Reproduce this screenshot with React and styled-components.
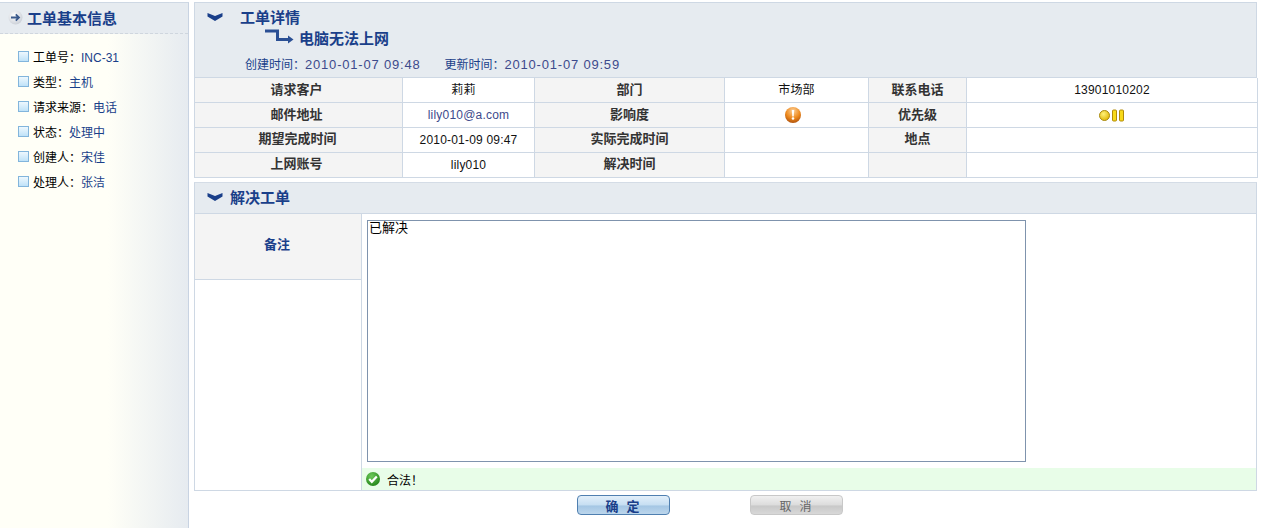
import styled, { createGlobalStyle } from 'styled-components'

const Global = createGlobalStyle`
    html, body {
        margin: 0;
        padding: 0;
        height: 100%;
        background: #fff;
        font-family: "Liberation Sans", "Noto Sans CJK SC", sans-serif;
        font-size: 12px;
        color: #000;
    }
`
const Page = styled.div`
    display: flex;
    height: 528px;
    overflow: hidden;
`
const Sidebar = styled.aside`
    width: 189px;
    flex: none;
    box-sizing: border-box;
    margin-top: 2px;
    border-top: 1px solid #ced8e4;
    border-right: 1px solid #c8d3e2;
    background: linear-gradient(90deg, #fffff7 0, #fffff7 108px, #e6ebf0 188px);
`
const SideHead = styled.div`
    height: 31px;
    box-sizing: border-box;
    display: flex;
    align-items: center;
    gap: 4px;
    padding: 0 0 2px 8px;
    background: #e6ebf0;
    border-bottom: 1px dashed #cfd6de;
    color: #1a3f8a;
    font-size: 15px;
    font-weight: bold;
`
const SideList = styled.ul`
    list-style: none;
    margin: 0;
    padding: 10px 0 0 18px;
`
const SideItem = styled.li`
    display: flex;
    align-items: center;
    height: 25px;
    gap: 4px;
`
const Square = styled.i`
    width: 9px;
    height: 9px;
    flex: none;
    border: 1px solid #82b5dc;
    background: linear-gradient(#eef8fe, #bfe2f8);
`
const Link = styled.span`
    color: #1a3f8a;
`
const Main = styled.main`
    width: 1063px;
    flex: none;
    margin: 2px 0 0 5px;
`
const DetailHead = styled.div`
    height: 76px;
    box-sizing: border-box;
    border: 1px solid #ced8e4;
    background: #e6ebf0;
    padding: 6px 0 0 12px;
    color: #1a3f8a;
`
const TitleRow = styled.div`
    display: flex;
    align-items: center;
    height: 15px;
    font-size: 15px;
    font-weight: bold;
    gap: 17px;
`
const SubRow = styled.div`
    display: flex;
    align-items: center;
    height: 16px;
    margin: 5px 0 0 57px;
    gap: 5px;
    font-size: 15px;
    font-weight: bold;
`
const Times = styled.div`
    display: flex;
    gap: 24px;
    margin: 12px 0 0 38px;
    line-height: 16px;
`
const Stamp = styled.span`
    color: #3d4a8c;
    font-size: 13px;
    letter-spacing: 0.8px;
`
const Grid = styled.div`
    display: grid;
    grid-template-columns: 208px 132px 190px 144px 98px 291px;
    grid-auto-rows: 25px;
    border-left: 1px solid #ced8e4;
`
const Cell = styled.div`
    box-sizing: border-box;
    display: flex;
    align-items: center;
    justify-content: center;
    border-right: 1px solid #ced8e4;
    border-bottom: 1px solid #ced8e4;
    background: #fff;
    color: ${p => (p.$blue ? '#3d4a8c' : '#111')};
    letter-spacing: 0.2px;
    padding-bottom: ${p => (p.$up ? '4px' : '0')};
    padding-right: ${p => p.$pull || 0}px;
`
const HeadCell = styled(Cell)`
    background: #f4f4f4;
    color: #333;
    font-size: 13px;
    font-weight: bold;
    letter-spacing: 0;
    padding-bottom: ${p => (p.$high ? '6px' : '4px')};
`
const Section = styled.section`
    margin-top: 4px;
    border: 1px solid #ced8e4;
    border-top-color: #d4dce6;
`
const SectionHead = styled.div`
    height: 31px;
    box-sizing: border-box;
    display: flex;
    align-items: center;
    gap: 7px;
    padding: 0 0 3px 12px;
    background: #e6ebf0;
    border-bottom: 1px solid #ced8e4;
    color: #1a3f8a;
    font-size: 15px;
    font-weight: bold;
`
const FormRow = styled.div`
    display: flex;
    height: 276px;
`
const LabelCol = styled.div`
    width: 167px;
    flex: none;
    box-sizing: border-box;
    border-right: 1px solid #ced8e4;
`
const Label = styled.div`
    height: 66px;
    box-sizing: border-box;
    display: flex;
    align-items: center;
    justify-content: center;
    padding: 0 2px 6px 0;
    background: #f4f4f4;
    border-bottom: 1px solid #ced8e4;
    color: #1a3f8a;
    font-size: 13px;
    font-weight: bold;
`
const FieldCol = styled.div`
    flex: 1;
    min-width: 0;
    display: flex;
    flex-direction: column;
`
const Area = styled.textarea`
    display: block;
    box-sizing: border-box;
    width: 659px;
    height: 242px;
    margin: 6px 0 6px 5px;
    padding: 0 1px;
    border: 1px solid #7f93ad;
    border-radius: 0;
    outline: none;
    resize: none;
    overflow: hidden;
    font: 13px/14px "Liberation Sans", "Noto Sans CJK SC", sans-serif;
    color: #000;
`
const Valid = styled.div`
    height: 22px;
    display: flex;
    align-items: center;
    gap: 7px;
    padding-left: 4px;
    background: #e8fde8;
`
const Actions = styled.div`
    display: flex;
    gap: 80px;
    margin: 4px 0 0 383px;
`
const Btn = styled.button`
    width: 93px;
    height: 20px;
    padding: 0;
    box-sizing: border-box;
    border-radius: 4px;
    border: 1px solid ${p => (p.$off ? '#c8c8c8' : '#4f7fb0')};
    background: ${p =>
        p.$off
            ? 'linear-gradient(#f0f0f0, #dcdcdc 50%, #c8c8c8 55%, #d8d8d8)'
            : 'linear-gradient(#e2effa, #c6def2 50%, #a4c6e4 55%, #bcd6ec)'};
    color: ${p => (p.$off ? '#666' : '#1a3f8a')};
    font: ${p => (p.$off ? 'normal' : 'bold')} ${p => (p.$off ? 12 : 13)}px "Liberation Sans", "Noto Sans CJK SC", sans-serif;
    letter-spacing: 8px;
    text-indent: 6px;
`

const ArrowOrb = () => (
    <svg width="15" height="15" viewBox="0 0 15 15">
        <defs>
            <radialGradient id="orb" cx="0.4" cy="0.35" r="0.7">
                <stop offset="0" stopColor="#ffffff" />
                <stop offset="1" stopColor="#c9ced6" />
            </radialGradient>
        </defs>
        <circle cx="7.5" cy="7.5" r="7" fill="url(#orb)" />
        <path d="M3 7.5h8M7.8 4.3l3.2 3.2-3.2 3.2" fill="none" stroke="#3b5a8c" strokeWidth="1.8" />
    </svg>
)
const Chevron = () => (
    <svg width="16" height="8" viewBox="0 0 16 8">
        <path d="M0.5 0 L8 3 L15.5 0 V3.5 L8 8 L0.5 3.5 Z" fill="#1a3f8a" />
    </svg>
)
const BentArrow = () => (
    <svg width="30" height="16" viewBox="0 0 30 16">
        <path d="M1 2h12.5v8.5h11" fill="none" stroke="#2a4f94" strokeWidth="3" />
        <path d="M24 6.5l5.5 4-5.5 4z" fill="#2a4f94" />
    </svg>
)
const Alert = () => (
    <svg width="16" height="16" viewBox="0 0 16 16">
        <defs>
            <radialGradient id="alert" cx="0.5" cy="0.25" r="0.8">
                <stop offset="0" stopColor="#fbd09a" />
                <stop offset="0.55" stopColor="#ee8a1e" />
                <stop offset="1" stopColor="#a84c0c" />
            </radialGradient>
        </defs>
        <circle cx="8" cy="8" r="8" fill="url(#alert)" />
        <path d="M6.8 3h2.4l-.5 6.5H7.3z" fill="#fff" />
        <circle cx="8" cy="11.5" r="1.3" fill="#fff" />
    </svg>
)
const Priority = () => (
    <svg width="27" height="13" viewBox="0 0 27 13">
        <defs>
            <radialGradient id="amber" cx="0.4" cy="0.35" r="0.7">
                <stop offset="0" stopColor="#fff27a" />
                <stop offset="1" stopColor="#e0b400" />
            </radialGradient>
        </defs>
        <circle cx="5.5" cy="6.5" r="5" fill="url(#amber)" stroke="#a88a10" />
        <rect x="13.5" y="1" width="4" height="11" rx="1" fill="#f7d918" stroke="#b08a08" />
        <rect x="20.5" y="1" width="4" height="11" rx="1" fill="#f7d918" stroke="#b08a08" />
    </svg>
)
const Check = () => (
    <svg width="14" height="14" viewBox="0 0 14 14">
        <defs>
            <radialGradient id="ok" cx="0.4" cy="0.3" r="0.8">
                <stop offset="0" stopColor="#6cc95a" />
                <stop offset="1" stopColor="#1c7f14" />
            </radialGradient>
        </defs>
        <circle cx="7" cy="7" r="7" fill="url(#ok)" />
        <path d="M3.2 7l2.6 2.8 5-5.4" fill="none" stroke="#fff" strokeWidth="2.2" />
    </svg>
)

const sideItems = [
    ['工单号：', 'INC-31'],
    ['类型：', '主机'],
    ['请求来源：', '电话'],
    ['状态：', '处理中'],
    ['创建人：', '宋佳'],
    ['处理人：', '张洁'],
]

const App = () => (
    <>
        <Global />
        <Page>
            <Sidebar>
                <SideHead><ArrowOrb />工单基本信息</SideHead>
                <SideList>
                    {sideItems.map(([k, v]) => (
                        <SideItem key={k}>
                            <Square />
                            <span>{k}<Link>{v}</Link></span>
                        </SideItem>
                    ))}
                </SideList>
            </Sidebar>
            <Main>
                <DetailHead>
                    <TitleRow><Chevron />工单详情</TitleRow>
                    <SubRow><BentArrow />电脑无法上网</SubRow>
                    <Times>
                        <span>创建时间：<Stamp>2010-01-07 09:48</Stamp></span>
                        <span>更新时间：<Stamp>2010-01-07 09:59</Stamp></span>
                    </Times>
                </DetailHead>
                <Grid>
                    <HeadCell $pull={4}>请求客户</HeadCell>
                    <Cell $up $pull={10}>莉莉</Cell>
                    <HeadCell>部门</HeadCell>
                    <Cell $up>市场部</Cell>
                    <HeadCell>联系电话</HeadCell>
                    <Cell>13901010202</Cell>

                    <HeadCell $pull={4}>邮件地址</HeadCell>
                    <Cell $blue>lily010@a.com</Cell>
                    <HeadCell>影响度</HeadCell>
                    <Cell $pull={8}><Alert /></Cell>
                    <HeadCell>优先级</HeadCell>
                    <Cell><Priority /></Cell>

                    <HeadCell $high $pull={2}>期望完成时间</HeadCell>
                    <Cell>2010-01-09 09:47</Cell>
                    <HeadCell $high>实际完成时间</HeadCell>
                    <Cell />
                    <HeadCell $high>地点</HeadCell>
                    <Cell />

                    <HeadCell $high $pull={4}>上网账号</HeadCell>
                    <Cell>lily010</Cell>
                    <HeadCell $high>解决时间</HeadCell>
                    <Cell />
                    <HeadCell />
                    <Cell />
                </Grid>
                <Section>
                    <SectionHead><Chevron />解决工单</SectionHead>
                    <FormRow>
                        <LabelCol><Label>备注</Label></LabelCol>
                        <FieldCol>
                            <Area defaultValue="已解决" />
                            <Valid><Check />合法！</Valid>
                        </FieldCol>
                    </FormRow>
                </Section>
                <Actions>
                    <Btn>确定</Btn>
                    <Btn $off>取消</Btn>
                </Actions>
            </Main>
        </Page>
    </>
)

export default App
